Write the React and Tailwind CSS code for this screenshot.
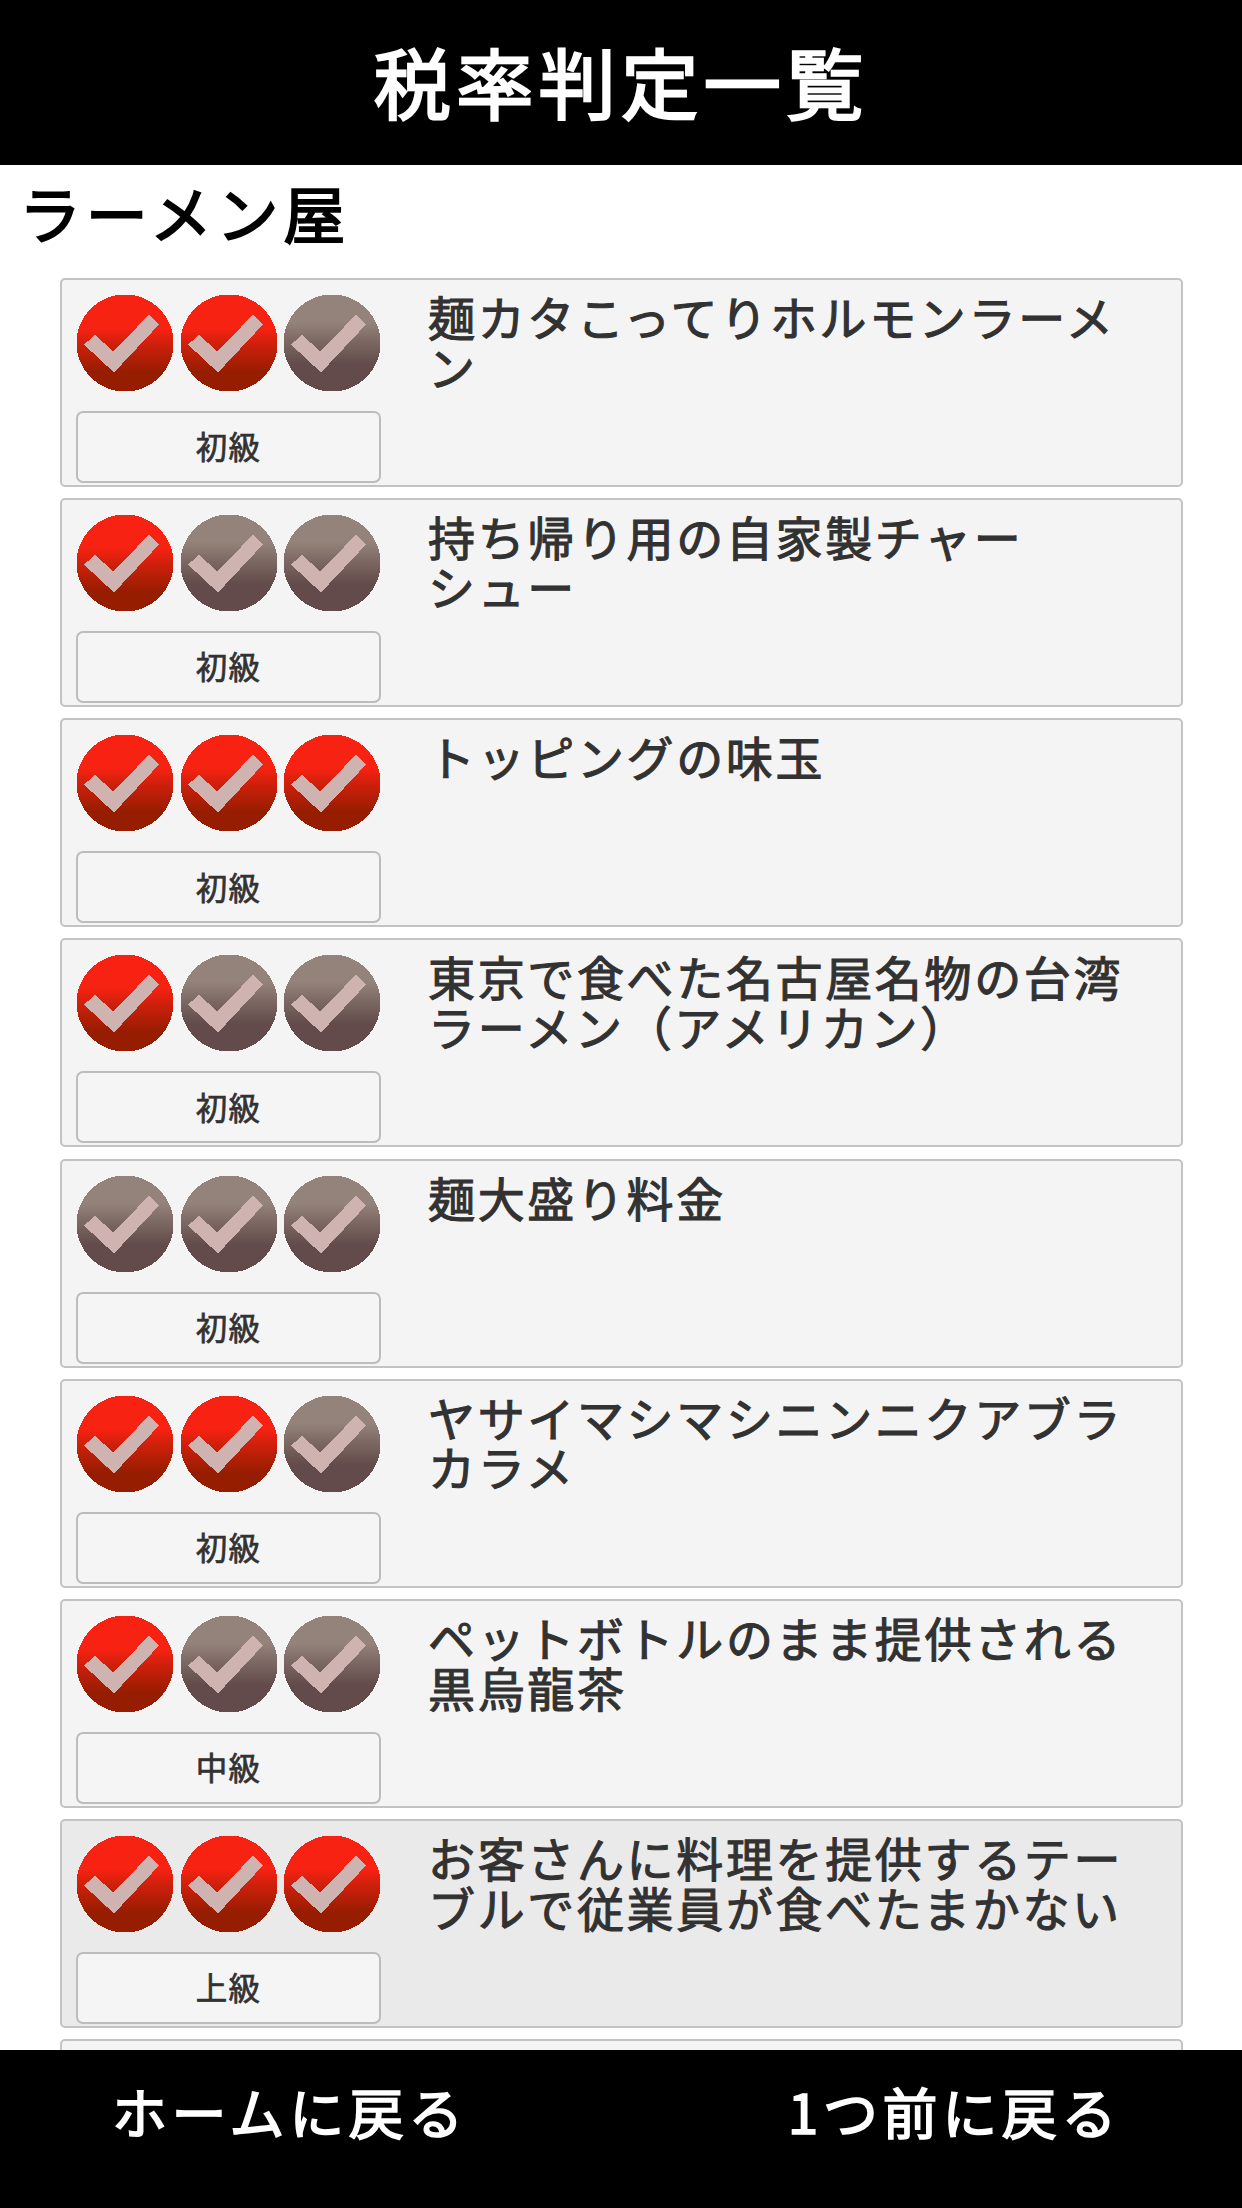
import React from 'react';

const ITEMS = [
  { score: 2, level: '初級', lines: ['麺カタこってりホルモンラーメ', 'ン'] },
  { score: 1, level: '初級', lines: ['持ち帰り用の自家製チャー', 'シュー'] },
  { score: 3, level: '初級', lines: ['トッピングの味玉'] },
  { score: 1, level: '初級', lines: ['東京で食べた名古屋名物の台湾', 'ラーメン（アメリカン）'] },
  { score: 0, level: '初級', lines: ['麺大盛り料金'] },
  { score: 2, level: '初級', lines: ['ヤサイマシマシニンニクアブラ', 'カラメ'] },
  { score: 1, level: '中級', lines: ['ペットボトルのまま提供される', '黒烏龍茶'] },
  { score: 3, level: '上級', active: true, lines: ['お客さんに料理を提供するテー', 'ブルで従業員が食べたまかない'] },
];

const CheckMark = ({ on }) => (
  <svg viewBox="0 0 98 98" shapeRendering="crispEdges" className="w-[98px] h-[98px] shrink-0">
    <circle cx="49" cy="49" r="48.5" fill={on ? 'url(#markOn)' : 'url(#markOff)'} />
    <path d="M8 50.5 L19 41 L37.5 57.5 L73 20.5 L83 30.5 L38 78.5 Z" fill="#cfb3b1" />
  </svg>
);

const ItemCard = ({ item }) => (
  <div
    className={`flex h-[209px] shrink-0 rounded-[5px] border-2 border-[#c3c3c3] pl-[14px] pt-[14px] ${
      item.active ? 'bg-[#eaeaea]' : 'bg-[#f4f4f4]'
    }`}
  >
    <div className="w-[305px] shrink-0">
      <div className="flex justify-between">
        {[1, 2, 3].map((n) => (
          <CheckMark key={n} on={n <= item.score} />
        ))}
      </div>
      <button className="mt-[19px] flex h-[72px] w-full items-center justify-center rounded-[7px] border-[2.5px] border-[#bcbcbc] bg-[#f5f5f5] pb-[2px] text-[31.5px] leading-none tracking-[1.3px] text-[#323232] [-webkit-text-stroke:0.7px_#323232]">
        {item.level}
      </button>
    </div>
    <div className="-mt-[3px] ml-[47px] text-[47px] leading-[49.7px] tracking-[2.65px] text-[#323232] [-webkit-text-stroke:1.1px_#323232]">
      {item.lines.map((line) => (
        <p key={line} className="whitespace-nowrap">
          {line}
        </p>
      ))}
    </div>
  </div>
);

export default function App() {
  return (
    <div className="flex h-[2208px] w-[1242px] flex-col overflow-hidden bg-white font-['Noto_Sans_CJK_JP',sans-serif]">
      <svg className="absolute h-0 w-0">
        <defs>
          <linearGradient id="markOn" x1="0" y1="0" x2="0" y2="1">
            <stop offset="0.35" stopColor="#f72212" />
            <stop offset="0.5" stopColor="#d0200c" />
            <stop offset="0.8" stopColor="#961d00" />
          </linearGradient>
          <linearGradient id="markOff" x1="0" y1="0" x2="0" y2="1">
            <stop offset="0.28" stopColor="#94837b" />
            <stop offset="0.5" stopColor="#7a6661" />
            <stop offset="0.72" stopColor="#624b4a" />
          </linearGradient>
        </defs>
      </svg>

      <header className="flex h-[165px] shrink-0 items-center justify-center bg-black pb-[4px]">
        <h1 className="text-[77.5px] leading-none tracking-[5px] text-white [-webkit-text-stroke:2.3px_#fff]">
          税率判定一覧
        </h1>
      </header>

      <main className="flex min-h-0 flex-1 flex-col overflow-hidden">
        <h2 className="h-[113px] shrink-0 pl-[19px] pt-[15px] text-[62px] leading-[65px] tracking-[4.7px] text-black [-webkit-text-stroke:1.9px_#000]">
          ラーメン屋
        </h2>
        <div className="flex flex-col gap-[11.15px] pl-[60px] pr-[59px]">
          {ITEMS.map((item) => (
            <ItemCard key={item.lines[0]} item={item} />
          ))}
          {/* top edge of the next card, still scrolled under the footer */}
          <div className="h-[209px] shrink-0 rounded-[5px] border-2 border-[#c3c3c3] bg-[#f4f4f4]" />
        </div>
      </main>

      <footer className="flex h-[158px] shrink-0 items-start justify-between bg-black pl-[112px] pr-[121px] pt-[28px] text-[55px] leading-[64px] tracking-[4.6px] text-white [-webkit-text-stroke:1.7px_#fff]">
        <button>ホームに戻る</button>
        <button>1つ前に戻る</button>
      </footer>
    </div>
  );
}
